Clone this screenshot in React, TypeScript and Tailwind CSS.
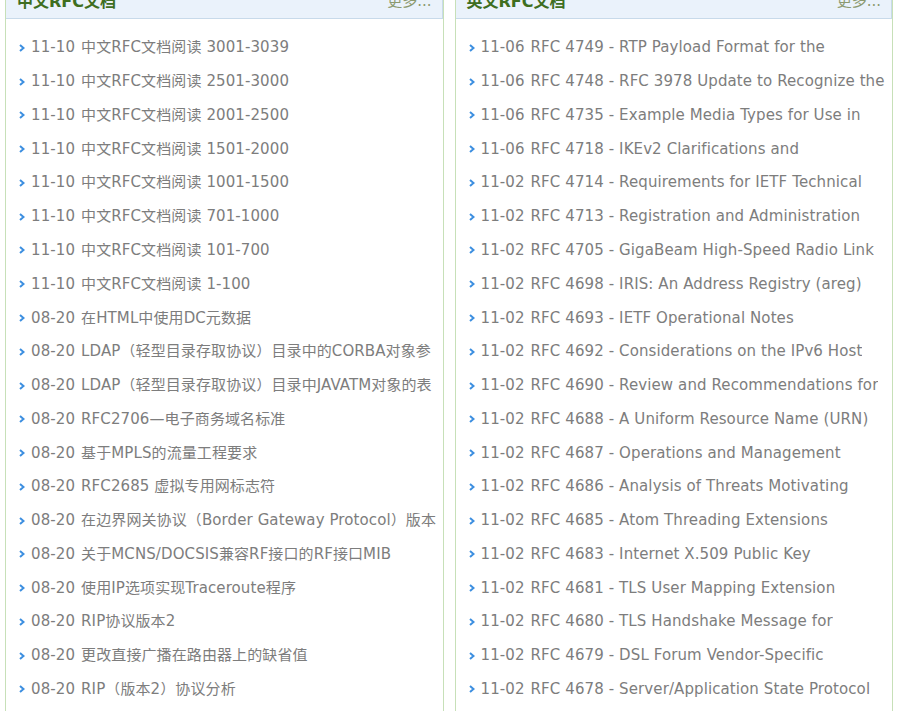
const cnItems = [
  ['11-10', '中文RFC文档阅读 3001-3039'],
  ['11-10', '中文RFC文档阅读 2501-3000'],
  ['11-10', '中文RFC文档阅读 2001-2500'],
  ['11-10', '中文RFC文档阅读 1501-2000'],
  ['11-10', '中文RFC文档阅读 1001-1500'],
  ['11-10', '中文RFC文档阅读 701-1000'],
  ['11-10', '中文RFC文档阅读 101-700'],
  ['11-10', '中文RFC文档阅读 1-100'],
  ['08-20', '在HTML中使用DC元数据'],
  ['08-20', 'LDAP（轻型目录存取协议）目录中的CORBA对象参'],
  ['08-20', 'LDAP（轻型目录存取协议）目录中JAVATM对象的表'],
  ['08-20', 'RFC2706—电子商务域名标准'],
  ['08-20', '基于MPLS的流量工程要求'],
  ['08-20', 'RFC2685 虚拟专用网标志符'],
  ['08-20', '在边界网关协议（Border Gateway Protocol）版本'],
  ['08-20', '关于MCNS/DOCSIS兼容RF接口的RF接口MIB'],
  ['08-20', '使用IP选项实现Traceroute程序'],
  ['08-20', 'RIP协议版本2'],
  ['08-20', '更改直接广播在路由器上的缺省值'],
  ['08-20', 'RIP（版本2）协议分析'],
];

const enItems = [
  ['11-06', 'RFC 4749 - RTP Payload Format for the'],
  ['11-06', 'RFC 4748 - RFC 3978 Update to Recognize the'],
  ['11-06', 'RFC 4735 - Example Media Types for Use in'],
  ['11-06', 'RFC 4718 - IKEv2 Clarifications and'],
  ['11-02', 'RFC 4714 - Requirements for IETF Technical'],
  ['11-02', 'RFC 4713 - Registration and Administration'],
  ['11-02', 'RFC 4705 - GigaBeam High-Speed Radio Link'],
  ['11-02', 'RFC 4698 - IRIS: An Address Registry (areg)'],
  ['11-02', 'RFC 4693 - IETF Operational Notes'],
  ['11-02', 'RFC 4692 - Considerations on the IPv6 Host'],
  ['11-02', 'RFC 4690 - Review and Recommendations for'],
  ['11-02', 'RFC 4688 - A Uniform Resource Name (URN)'],
  ['11-02', 'RFC 4687 - Operations and Management'],
  ['11-02', 'RFC 4686 - Analysis of Threats Motivating'],
  ['11-02', 'RFC 4685 - Atom Threading Extensions'],
  ['11-02', 'RFC 4683 - Internet X.509 Public Key'],
  ['11-02', 'RFC 4681 - TLS User Mapping Extension'],
  ['11-02', 'RFC 4680 - TLS Handshake Message for'],
  ['11-02', 'RFC 4679 - DSL Forum Vendor-Specific'],
  ['11-02', 'RFC 4678 - Server/Application State Protocol'],
];

const Bullet = () => (
  <svg width="6" height="8" viewBox="0 0 6 8" className="shrink-0">
    <path d="M1 1 L4.5 4 L1 7" stroke="#3d8fe0" strokeWidth="2" fill="none" />
  </svg>
);

interface PanelProps {
  title: string;
  items: string[][];
}

const Panel = ({ title, items }: PanelProps) => {
  return (
    <div className="flex-1 min-w-0 border-x border-[#c7e0b8] bg-white">
      <div className="h-[34px] flex items-center justify-between pl-[11px] pr-[10px] bg-[#eaf2fb] border-b border-r border-[#c8daea]">
        <span className="text-[16px] font-bold text-[#3e6e1f]">{title}</span>
        <span className="text-[15px] text-[#8c9a70]">更多...</span>
      </div>
      <ul className="pt-[12px] pb-[20px]">
        {items.map(([date, text], i) => (
          <li key={i} className="h-[33.78px] flex items-center gap-[6px] pl-[13px] pr-[1px] whitespace-nowrap overflow-hidden tracking-[0.1px]">
            <Bullet />
            <span className="text-[#7d7d7d]">{date}</span>
            <span className="text-[#7d7d7d] overflow-hidden">{text}</span>
          </li>
        ))}
      </ul>
    </div>
  );
};

export default function App() {
  return (
    <div
      className="w-[898px] h-[711px] overflow-hidden bg-white text-[15px] leading-none"
      style={{ fontFamily: '"DejaVu Sans", "Noto Sans CJK SC", sans-serif' }}
    >
      <div className="-mt-[15px] flex gap-[11px] px-[5px]">
        <Panel title="中文RFC文档" items={cnItems} />
        <Panel title="英文RFC文档" items={enItems} />
      </div>
    </div>
  );
}
